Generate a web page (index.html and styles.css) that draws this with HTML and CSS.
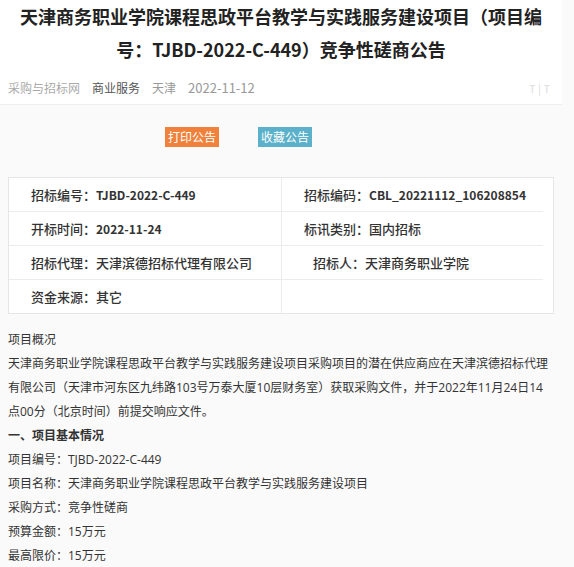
FILE: index.html
```html
<!DOCTYPE html>
<html lang="zh-CN">
<head>
    <meta charset="UTF-8">
    <meta name="viewport" content="width=device-width, initial-scale=1.0">
    <title>竞争性磋商公告</title>

    <link rel="stylesheet" href="styles.css">
</head>
<body>
    <div class="article">
        <div class="article-head">
            <h1 class="title">天津商务职业学院课程思政平台教学与实践服务建设项目（项目编号：TJBD-2022-C-449）竞争性磋商公告</h1>

            <div class="meta">
                <span class="site">采购与招标网</span>
                <span class="category">商业服务</span>
                <span class="area">天津</span>
                <span class="date">2022-11-12</span>
                <span class="font-size">T | T</span>
            </div>
        </div>

        <!-- Print / favourite -->
        <div class="actions">
            <a class="btn btn-print" href="#">打印公告</a>
            <a class="btn btn-fav" href="#">收藏公告</a>
        </div>

        <div class="info">
            <div class="cell">招标编号：<b>TJBD-2022-C-449</b></div>
            <div class="cell cell-right">招标编码：<b>CBL_20221112_106208854</b></div>
            <div class="cell">开标时间：<b>2022-11-24</b></div>
            <div class="cell cell-right">标讯类别：国内招标</div>
            <div class="cell">招标代理：天津滨德招标代理有限公司</div>
            <div class="cell cell-right cell-indent">招标人：天津商务职业学院</div>
            <div class="cell cell-last">资金来源：其它</div>
            <div class="cell cell-right cell-last"></div>
        </div>

        <div class="content">
            <p>项目概况</p>
            <p>天津商务职业学院课程思政平台教学与实践服务建设项目采购项目的潜在供应商应在天津滨德招标代理有限公司（天津市河东区九纬路103号万泰大厦10层财务室）获取采购文件，并于2022年11月24日14点00分（北京时间）前提交响应文件。</p>
            <p class="section">一、项目基本情况</p>
            <p>项目编号：TJBD-2022-C-449</p>
            <p>项目名称：天津商务职业学院课程思政平台教学与实践服务建设项目</p>
            <p>采购方式：竞争性磋商</p>
            <p>预算金额：15万元</p>
            <p>最高限价：15万元</p>
        </div>
    </div>
</body>
</html>
```

FILE: styles.css
```css
html, body {
    margin: 0;
    background: #fafafa;
    font-family: "Noto Sans CJK SC", "Noto Sans", sans-serif;
    color: #333;
}

.article {
    width: 546px;
    padding: 0 8px;
}

/* Header: title + meta line */
.article-head {
    border-bottom: 1px solid #eee;
    margin: 0 -8px;
    padding: 0 8px 6px;
    background: #fff;
}

.title {
    margin: 0;
    padding: 0 10px;
    font-size: 18px;
    line-height: 33px;
    font-weight: bold;
    text-align: center;
    color: #222;
}

.meta {
    display: flex;
    align-items: center;
    gap: 12px;
    margin-top: 12px;
    font-size: 12px;
    line-height: 20px;
    color: #999;
}

.meta .site {
    color: #aaa;
}

.meta .category {
    color: #555;
}

.meta .date {
    font-size: 13px;
}

.meta .font-size {
    margin-left: auto;
    margin-right: 4px;
    color: #ddd;
    font-size: 11px;
}

/* Buttons */
.actions {
    display: flex;
    gap: 39px;
    padding-left: 157px;
    margin-top: 22px;
}

.btn {
    display: block;
    height: 20px;
    line-height: 20px;
    padding: 0 3px;
    font-size: 12px;
    color: #fff;
    text-decoration: none;
}

.btn-print {
    background-color: #f0813a;
}

.btn-fav {
    background-color: #5ab1c9;
}

/* Info table */
.info {
    display: grid;
    grid-template-columns: 272px 1fr;
    margin-top: 30px;
    background: #fff;
    border: 1px solid #e6e6e6;
}

.cell {
    height: 33px;
    line-height: 33px;
    padding-left: 22px;
    font-size: 13px;
    font-weight: 500;
    color: #333;
    border-bottom: 1px solid #ececec;
}

.cell b {
    font-size: 12px;
    font-weight: bold;
}

.cell-right {
    border-left: 1px solid #ececec;
    margin-right: 10px;
}

.cell-indent {
    padding-left: 31px;
}

.cell-last {
    border-bottom: none;
}

/* Body text */
.content {
    margin-top: 14px;
    font-family: "Open Sans", "Noto Sans CJK SC", sans-serif;
    font-size: 12px;
    line-height: 24px;
    color: #333;
}

.content p {
    margin: 0;
}

.content .section {
    font-weight: bold;
}
```
